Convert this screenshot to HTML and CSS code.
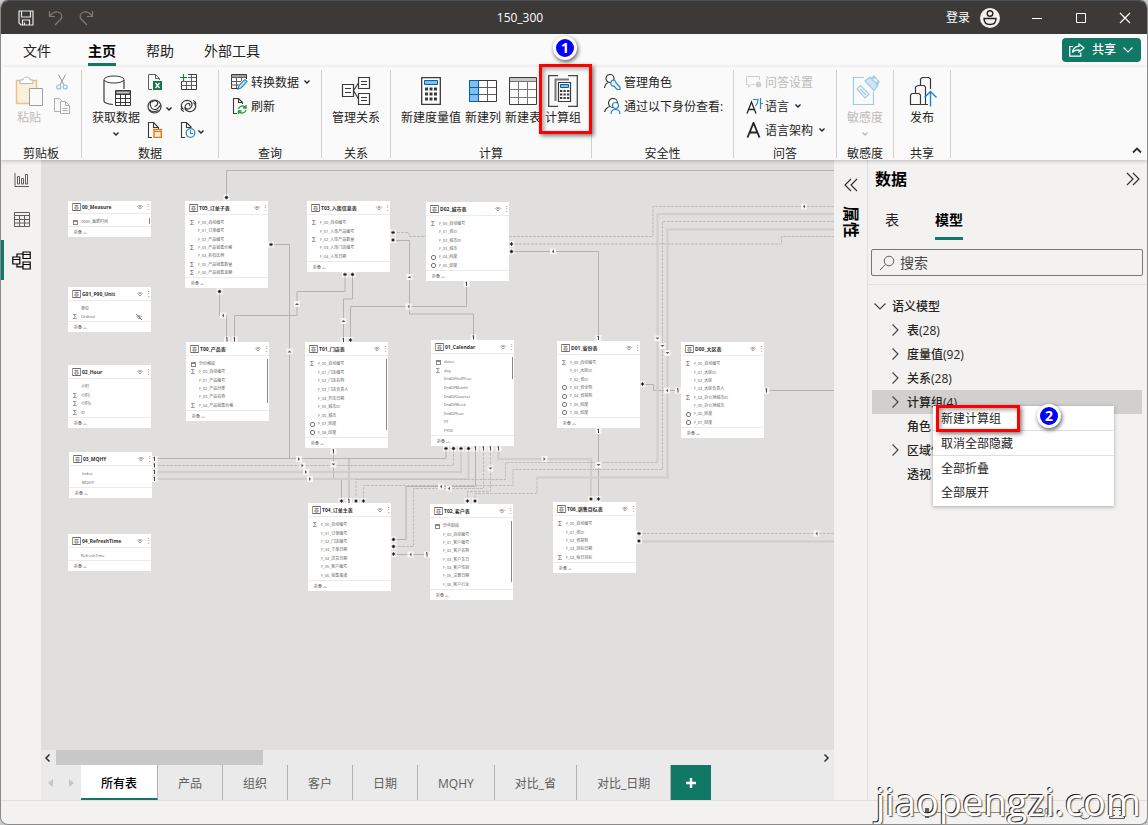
FILE: index.html
```html
<!DOCTYPE html>
<html lang="zh-CN">
<head>
<meta charset="utf-8">
<title>150_300</title>
<link rel="stylesheet" href="styles.css">
</head>
<body>
<svg class="sprite" aria-hidden="true">
  <defs>
    <symbol id="i-table" viewBox="0 0 9 8"><path d="M.5.5h8v7h-8z" fill="#fff" stroke="#6a6a70"/><path d="M.5 0v8" stroke="#c98b6a"/><path d="M8.500 0v8" stroke="#6f93b5"/><path d="M2.500 2.500h4M3 4h3v2H3z" fill="none" stroke="#6b6b6b" stroke-width=".8"/></symbol>
    <symbol id="i-eye" viewBox="0 0 8 6"><path d="M.8 3C2 1 6 1 7.200 3" fill="none" stroke="#a19f9d" stroke-width=".8"/><circle cx="4" cy="3.500" r="1.200" fill="none" stroke="#8a8886" stroke-width=".8"/></symbol>
    <symbol id="i-down" viewBox="0 0 8 8"><path d="M1.500 2.500 4 5l2.500-2.500" fill="none" stroke="currentColor" stroke-width="1.400"/></symbol>
    <symbol id="i-right" viewBox="0 0 12 12"><path d="M3.500.5 9 6l-5.500 5.500" fill="none" stroke="currentColor" stroke-width="1.200"/></symbol>
  </defs>
</svg>
<div class="window">
  <header class="titlebar">
    <div class="quick">
      <button type="button" aria-label="保存"><svg width="16" height="16" viewBox="0 0 16 16" fill="none" stroke="#e8e8e8" stroke-width="1.200"><path d="M1 1h14v14H3l-2-2zM3.500 1v6h9V1M4.500 15v-5h7v5M6.500 12.500V15"/></svg></button>
      <button type="button" aria-label="撤消"><svg width="16" height="16" viewBox="0 0 16 16" fill="none" stroke="#7d7b79" stroke-width="1.200"><path d="M1.500 1v5.500H7M1.500 6.500C4 3 7 1.500 10 2c4 .7 5 5 2.500 7.500L7 15"/></svg></button>
      <button type="button" aria-label="恢复"><svg width="16" height="16" viewBox="0 0 16 16" fill="none" stroke="#7d7b79" stroke-width="1.200"><path d="M14.500 1v5.500H9M14.500 6.500C12 3 9 1.500 6 2c-4 .7-5 5-2.500 7.500L9 15"/></svg></button>
    </div>
    <h1 class="doc">150_300</h1>
    <button class="login" type="button">登录 <svg width="20" height="20" viewBox="0 0 20 20"><circle cx="10" cy="10" r="10" fill="#f3f2f1"/><circle cx="10" cy="5.500" r="2.800" fill="none" stroke="#252423" stroke-width="1.400"/><path d="M4 10.500h12c0 4-2.500 6-6 6s-6-2-6-6z" fill="none" stroke="#252423" stroke-width="1.400"/></svg></button>
    <button class="win" type="button" aria-label="最小化"><svg width="12" height="12" viewBox="0 0 12 12"><path d="M1 6.500h10" stroke="#fff"/></svg></button>
    <button class="win" type="button" aria-label="最大化"><svg width="12" height="12" viewBox="0 0 12 12"><path d="M1.500 1.500h9v9h-9z" fill="none" stroke="#fff"/></svg></button>
    <button class="win" type="button" aria-label="关闭"><svg width="12" height="12" viewBox="0 0 12 12"><path d="m1 1 10 10M11 1 1 11" stroke="#fff" stroke-width="1.200"/></svg></button>
  </header>

  <nav class="menubar">
    <a href="#file" class="file">文件</a>
    <a href="#home" class="current">主页</a>
    <a href="#help">帮助</a>
    <a href="#tools">外部工具</a>
    <button class="share" type="button"><svg width="16" height="14" viewBox="0 0 16 14" fill="none" stroke="#fff" stroke-width="1.200"><path d="M4 3.500H.8v9.700h11V9.500"/><path d="M10 1l5 4-5 4V6.800C7 6.800 5 7.500 3.500 9.500 4 6 6 3.500 10 3.200z"/></svg><span>共享</span><svg width="10" height="6" viewBox="0 0 10 6"><path d="m.5.5 4.500 4.500L9.500.5" fill="none" stroke="#fff" stroke-width="1.200"/></svg></button>
  </nav>

  <section class="ribbon">
    <div class="group g-clip">
      <div class="tools">
        <button class="big off" type="button"><svg width="30" height="32" viewBox="0 0 30 32" fill="none"><path d="M2.500 5.500h20v23h-20z" fill="#faf0da" stroke="#f0bf85" stroke-width="1.500"/><path d="M6 8.500V5h3c0-4 7-4 7 0h3v3.500z" fill="#fff" stroke="#b9b7b5"/><path d="M15.500 13.500h13v17h-13z" fill="#fafafa" stroke="#a19f9d"/></svg><span>粘贴</span></button>
        <div class="stack">
          <button type="button" aria-label="剪切"><svg width="12" height="16" viewBox="0 0 12 16" fill="none"><path d="M2.500.5 8 11M9.500.5 4 11" stroke="#9a9896"/><circle cx="2.800" cy="13" r="2" stroke="#8dbfe0" stroke-width="1.200"/><circle cx="9.200" cy="13" r="2" stroke="#8dbfe0" stroke-width="1.200"/></svg></button>
          <button type="button" aria-label="复制"><svg width="16" height="16" viewBox="0 0 16 16" fill="none" stroke="#b0aeac"><path d="M6 13.500H.5V.5h5l2 2"/><path d="M6.500 3.500h5l4 4v8h-9zM11.500 3.500v4h4M8.500 10.500h5M8.500 12.500h5"/></svg></button>
        </div>
      </div>
      <p>剪贴板</p>
    </div>

    <div class="group g-data">
      <div class="tools">
        <button class="big" type="button"><svg width="30" height="32" viewBox="0 0 30 32" fill="none" stroke="#3b3a39"><ellipse cx="13" cy="4.500" rx="10" ry="3.500" fill="#fff"/><path d="M3 5v21c0 2 4 3 9 3.500M23 5v9" stroke-width="1.200"/><path d="M14.500 15.500h15v15h-15z" fill="#fff"/><path d="M15 16h14v3H15z" fill="#c8c6c4"/><path d="M14.500 19.500h15M14.500 23.500h15M14.500 27.500h15M19.500 19v11M24.500 19v11"/></svg><span>获取数据</span><svg width="8" height="8"><use href="#i-down"/></svg></button>
        <div class="stack">
          <button type="button" aria-label="Excel 工作簿"><svg width="16" height="16" viewBox="0 0 16 16" fill="none"><path d="M5 15.500H1.500V.5h7l4 4V6M8.500.5v4h4" stroke="#605e5c"/><path d="M6 7h9v9H6z" fill="#107c41"/><path d="m8.500 9 4 5M12.500 9l-4 5" stroke="#fff" stroke-width="1.300"/></svg></button>
          <button type="button" aria-label="数据中心"><svg width="15" height="15" viewBox="0 0 15 15" fill="none" stroke="#3b3a39" stroke-width="1.200"><circle cx="7.500" cy="7.500" r="6.500"/><path d="M4 2C2 5.500 4 10 7 10.500c3 .5 5-2 6.500-4.500M4.500 3.500C6 1.500 9 1 10.500 3c1 2-1 4-3 4.500M2 10.500c3 3 7 2.500 9.500.5"/></svg></button>
          <button type="button" aria-label="输入数据"><svg width="16" height="16" viewBox="0 0 16 16" fill="none"><path d="M5 15.500H1.500V.5h5l5 5V7M6.500.5v5h5" stroke="#3b3a39" stroke-width="1.100"/><path d="M7 7.500h7.300v8H7z" fill="#fbe9d5" stroke="#e07a1f" stroke-width="1.400"/><path d="M7 9.500h7" stroke="#e07a1f"/></svg></button>
        </div>
        <svg class="drop" width="8" height="8"><use href="#i-down"/></svg>
        <div class="stack">
          <button type="button" aria-label="SQL Server"><svg width="17" height="16" viewBox="0 0 17 16" fill="none"><path d="M1.500 8v7.500h15V.5H8" stroke="#3b3a39"/><path d="M1 11.500h15M8 3.500h8M1 7.500h15M6.500 7v8M11.500 1v14" stroke="#605e5c"/><path d="M0 3.500h7M3.500 0v7" stroke="#10893e" stroke-width="1.200"/></svg></button>
          <button type="button" aria-label="Dataverse"><svg width="17" height="14" viewBox="0 0 17 14" fill="none" stroke="#3b3a39" stroke-width="1.200"><path d="M3.500 10.500C0 8 1 3.500 4.500 2 8 .5 12.500 2 12 6c-.3 3-4 5-6 3.500S5.500 5 8 4.500c1.500-.2 2.500 1 1.500 2.500M13.500 3.500c3.500 2.500 2.500 7-1 8.500-3.500 1.500-8 0-7.500-4"/><path d="M4 12.500c-3-1-3.500-3-2-5M13 1.500c3 1 3.500 3 2 5"/></svg></button>
          <button type="button" aria-label="最近使用的源"><svg width="16" height="16" viewBox="0 0 16 16" fill="none"><path d="M5 15.500H1.500V.5h5l5 5M6.500.5v5h5" stroke="#3b3a39" stroke-width="1.100"/><circle cx="10.500" cy="11" r="4.300" fill="#fff" stroke="#2b88c8" stroke-width="1.300"/><path d="M10.500 8v3.500h2.500" stroke="#2b88c8" stroke-width="1.200"/></svg></button>
        </div>
        <svg class="drop low" width="8" height="8"><use href="#i-down"/></svg>
      </div>
      <p>数据</p>
    </div>

    <div class="group g-query">
      <div class="stack">
        <button type="button"><svg width="17" height="16" viewBox="0 0 17 16" fill="none"><path d="M7 14.500H.5V.5h15V5" stroke="#3b3a39"/><path d="M1 1h14v2.500H1z" fill="#a19f9d"/><path d="M0 3.500h15M0 7.500h10M0 11h8M5.500 4v10M10.500 4v3" stroke="#605e5c"/><path d="m7 15 1-3.500L14 5.500l2 2-6 6.500z" fill="#d5e9f7" stroke="#2b88c8" stroke-width="1.200"/></svg><span>转换数据</span><svg width="8" height="8"><use href="#i-down"/></svg></button>
        <button type="button"><svg width="17" height="16" viewBox="0 0 17 16" fill="none"><path d="M6 15.500H2.500V.5h5l4 4V6M7.500.5v4h4" stroke="#3b3a39" stroke-width="1.100"/><path d="M7.500 11c.5-3 5-4 7-1.500M15 7v3h-3M15 12c-.5 3-5 4-7 1.500M7.500 16v-3h3" stroke="#2d9a3c" stroke-width="1.400"/></svg><span>刷新</span></button>
      </div>
      <p>查询</p>
    </div>

    <div class="group g-rel">
      <div class="tools">
        <button class="big" type="button"><svg width="30" height="32" viewBox="0 0 30 32" fill="none" stroke="#3b3a39" stroke-width="1.200"><path d="M1.500 9.500h11v12h-11zM17.500 2.500h11v11h-11zM17.500 18.500h11v11h-11zM12.500 15.500 17.500 8M12.500 15.500l5 8.500"/><path d="M4 13.500h6M4 17.500h6M20 6.500h6M20 9.500h6M20 22.500h6M20 25.500h6" stroke-width="1"/></svg><span>管理关系</span></button>
      </div>
      <p>关系</p>
    </div>

    <div class="group g-calc">
      <div class="tools">
        <button class="big" type="button"><svg width="20" height="32" viewBox="0 0 20 32" fill="none"><path d="M.7 2.700h18.600v26.600H.7z" fill="#fff" stroke="#3b3a39" stroke-width="1.300"/><path d="M3.500 5.500h13v4h-13z" fill="#83beec" stroke="#0063b1"/><path d="M4 14h12M4 19h12M4 24h12" stroke="#3b3a39" stroke-width="3" stroke-dasharray="3 1.500"/></svg><span>新建度量值</span></button>
        <button class="big" type="button"><svg width="28" height="32" viewBox="0 0 28 32" fill="none"><path d="M.5 5.500h27v21H.5z" fill="#fff"/><path d="M.5 5.500h9v21h-9z" fill="#83beec"/><path d="M9.500 5v21M18.500 5v21M1 12.500h26M1 19.500h26" stroke="#605e5c"/><path d="M.5 5.500h27v21H.5z" stroke="#3b3a39"/><path d="M9 5.500H.5v21H9M.5 12.500H9M.5 19.500H9M9.500 5v21" stroke="#0063b1"/></svg><span>新建列</span></button>
        <button class="big" type="button"><svg width="28" height="32" viewBox="0 0 28 32" fill="none"><path d="M.5 2.500h27v27H.5z" fill="#fff"/><path d="M1 3h26v3.500H1z" fill="#c8c6c4"/><path d="M.5 6.500h27M.5 14.500h27M.5 22.500h27M9.500 7v22M18.500 7v22" stroke="#797775"/><path d="M.5 2.500h27v27H.5z" stroke="#3b3a39"/></svg><span>新建表</span></button>
        <div class="callout">
          <button class="big" type="button"><svg width="30" height="32" viewBox="0 0 30 32" fill="none"><path d="M10 .7H.7v30.600H10M20 .7h9.300v30.600H20" stroke="#484644" stroke-width="1.300"/><path d="M7.500 26V4.500H21" stroke="#797775" stroke-width="2"/><path d="M10.500 7.500h12v19h-12z" fill="#fff" stroke="#3b3a39" stroke-width="1.200"/><path d="M12.500 9.500h8v3h-8z" fill="#83beec" stroke="#0063b1"/><path d="M12 16h9.500M12 19.500h9.500M12 23h9.500" stroke="#3b3a39" stroke-width="2.200" stroke-dasharray="2.300 1.200"/></svg><span>计算组</span></button>
          <i class="frame"></i><b class="marker">1</b>
        </div>
      </div>
      <p>计算</p>
    </div>

    <div class="group g-sec">
      <div class="stack">
        <button type="button"><svg width="17" height="16" viewBox="0 0 17 16" fill="none"><circle cx="6" cy="4.500" r="4" stroke="#3b3a39" stroke-width="1.200"/><path d="M.5 14c.5-3 2-5 4-5.500" stroke="#3b3a39" stroke-width="1.200"/><path d="M7 8c1-3 5-2 5 1l4 4v2.500h-3l-3-3.500c-2 .5-4-1.500-3-4z" fill="#eaf4fb" stroke="#2b88c8" stroke-width="1.200"/></svg><span>管理角色</span></button>
        <button type="button"><svg width="17" height="16" viewBox="0 0 17 16" fill="none"><circle cx="9" cy="5" r="4.500" stroke="#3b3a39" stroke-width="1.200"/><path d="M.5 14c1-3 3-5 5.500-5.500" stroke="#3b3a39" stroke-width="1.200"/><circle cx="11.500" cy="7.500" r="3" fill="#fafafa" stroke="#2b88c8" stroke-width="1.200"/><path d="M7 16c0-6 9-6 9 0" stroke="#2b88c8" stroke-width="1.200"/></svg><span>通过以下身份查看:</span></button>
      </div>
      <p>安全性</p>
    </div>

    <div class="group g-qa">
      <div class="stack">
        <button class="off" type="button"><svg width="17" height="14" viewBox="0 0 17 14" fill="none" stroke="#d2d0ce"><path d="M9 9.500H5l-2.500 3v-3h-2v-8h13V5"/><circle cx="12.500" cy="9.500" r="2.500" fill="#d2d0ce"/></svg><span>问答设置</span></button>
        <button type="button"><svg width="17" height="16" viewBox="0 0 17 16" fill="none"><path d="M1 15.500 5.500 4 10 15.500M2.500 11.500h6" stroke="#252423" stroke-width="1.300"/><path d="M7 1.500h5c0 3-1 5-2.500 6.500M14.500 0v11M14.500 5.500H17" stroke="#2b88c8" stroke-width="1.200"/></svg><span>语言</span><svg width="8" height="8"><use href="#i-down"/></svg></button>
        <button type="button"><svg width="17" height="16" viewBox="0 0 17 16" fill="none"><path d="M1.500 15.500 7.500.8l6 14.700M4 10.500h7.500" stroke="#252423" stroke-width="1.800"/></svg><span>语言架构</span><svg width="8" height="8"><use href="#i-down"/></svg></button>
      </div>
      <p>问答</p>
    </div>

    <div class="group g-sens">
      <div class="tools">
        <button class="big off" type="button"><svg width="30" height="32" viewBox="0 0 30 32" fill="none" stroke="#9fcbe8" stroke-width="1.200"><path d="M14 2.500H3.500v27h20V17"/><path d="m7 14 3.500-3.500L19 19l-4 4z" fill="#fafafa"/><path d="m10 14 6 6"/><path d="m15 6 5-4 8 8-4 5.500z" fill="#cfe5f4"/><path d="m21 4 3-3 5 6-3 3M25 2l-2 2M29 6l-3 2"/></svg><span>敏感度</span><svg width="8" height="8"><use href="#i-down"/></svg></button>
      </div>
      <p>敏感度</p>
    </div>

    <div class="group g-pub">
      <div class="tools">
        <button class="big" type="button"><svg width="30" height="32" viewBox="0 0 30 32" fill="none" stroke="#3b3a39" stroke-width="1.200"><path d="M23.500 14V4l-2-1.500h-6L13.500 4v6M18.500 17v-5l-1.500-1.500h-6L8.500 12v6M13.500 29.500V20l-1.500-1.500H5L3.500 20v9.500H21M18.500 17v12"/><path d="M23.500 31.500V16.500M17.500 22.500l6-6 6 6" stroke="#1a86c7" stroke-width="1.400"/></svg><span>发布</span></button>
      </div>
      <p>共享</p>
    </div>
    <button class="fold" type="button" aria-label="折叠功能区"><svg width="10" height="7" viewBox="0 0 10 7"><path d="m1 5.500 4-4 4 4" fill="none" stroke="#323130" stroke-width="1.800"/></svg></button>
  </section>

  <main class="work">
    <nav class="views">
      <a href="#report" aria-label="报表视图"><svg width="16" height="16" viewBox="0 0 16 16" fill="none" stroke="#605e5c"><path d="M1 1v13.500h14M3.500 4.500h2v7.500h-2zM7.500 6.500h2V12h-2zM11.500 2.500h2V12h-2z"/></svg></a>
      <a href="#table" aria-label="表格视图"><svg width="16" height="16" viewBox="0 0 16 16" fill="none" stroke="#605e5c"><path d="M.5.5h15v14H.5zM0 3.500h16M0 7.500h16M0 11h16M5.500 3v12M10.500 3v12"/></svg></a>
      <a href="#model" class="current" aria-label="模型视图"><svg width="19" height="19" viewBox="0 0 19 19" fill="none" stroke="#000" stroke-width="1.200"><path d="M.8 6h7v7h-7zM.8 8.500h7M11 1h7.200v6.500H11zM11 3.500h7M11 11h7.200v7H11zM11 13.500h7M5 6V3h6M5 13v2.800h6"/></svg></a>
    </nav>

    <div class="center">
      <div class="canvas">
        <svg class="wires" width="793" height="590" viewBox="41 160 793 590">
          <defs>
            <g id="w1"><rect x="-3" y="-3" width="6" height="6" fill="#f6f5f4"/><path d="M-1-1.500 0-2V2" fill="none" stroke="#323130" stroke-width=".9"/></g>
            <g id="wm"><rect x="-3" y="-3" width="6" height="6" fill="#f6f5f4"/><path d="M-1.800 0h3.600M0-1.800v3.600M-1.200-1.200l2.400 2.400M1.200-1.200l-2.400 2.400" stroke="#111" stroke-width=".8"/></g>
            <g id="wl"><rect x="-3" y="-3" width="6" height="6" fill="#f6f5f4"/><path d="M1-2v4l-2-2z" fill="#605e5c"/></g>
            <g id="wr"><rect x="-3" y="-3" width="6" height="6" fill="#f6f5f4"/><path d="M-1-2v4l2-2z" fill="#605e5c"/></g>
            <g id="wu"><rect x="-3" y="-3" width="6" height="6" fill="#f6f5f4"/><path d="M-2 1h4L0-1z" fill="#605e5c"/></g>
            <g id="wd"><rect x="-3" y="-3" width="6" height="6" fill="#f6f5f4"/><path d="M-2-1h4L0 1z" fill="#605e5c"/></g>
          </defs>
          <g class="solid">
            <path d="M226.500 197v-26.500H834M271 244.500h18.500v214h59.500V500M219.500 291v24.500h7V339M234.500 339v-23.500h62.500v-24h48V275M352.500 275v24h-9v41M350.500 340v-33.500h116V284M393 240.500h16.500v73.500h64V337M511 251.500h87.500V338M642 384.500h11.500v6H680M766 390.500h68M598.500 431v68M154 458.500h292V449M475.500 449v37.500h-69.500v53H393M333.500 451v28.500h8V500M393 554.500h35"/>
          </g>
          <g class="pale">
            <path d="M154 472h307v-23M154 479h314.500v-30M498.500 449v10H591v40M834 229.500H667.500V477.500H537M639 541.500h195M834 214H657.500V462.500"/>
          </g>
          <g class="dash">
            <path d="M393 232.500h16v4h244v-30h181M511 244h270.500v-7.500H834M657.500 462.500H505.500v17H356V500M834 221.500H662.500V469.500H513v16H363.500V500M537 477.500v16h-62V500M154 465.500h299.500V449M483.500 449v39.500h-70v58H393M490.500 449v42.500h-23V500M639 533.500h195"/>
          </g>
          <use href="#wm" x="226.500" y="197.500"/><use href="#wm" x="271" y="244.500"/><use href="#wm" x="219.500" y="291.500"/><use href="#wl" x="223" y="315.500"/><use href="#w1" x="227" y="339.500"/><use href="#w1" x="234.500" y="339.500"/>
          <use href="#wu" x="289.500" y="351.500"/><use href="#wu" x="297" y="304"/><use href="#wm" x="345" y="274.500"/><use href="#wm" x="352.500" y="274.500"/><use href="#wu" x="343.500" y="321"/><use href="#w1" x="343.500" y="340"/><use href="#wm" x="350.500" y="340"/>
          <use href="#wl" x="408.500" y="306.500"/><use href="#w1" x="466.500" y="284"/><use href="#wm" x="393" y="232.500"/><use href="#wm" x="393" y="240"/><use href="#wu" x="409.500" y="277"/><use href="#w1" x="473.500" y="337.500"/><use href="#wl" x="804" y="206.500"/>
          <use href="#wm" x="511.500" y="244"/><use href="#wm" x="511.500" y="251.500"/><use href="#wl" x="553" y="251.500"/><use href="#w1" x="598.500" y="338"/><use href="#wd" x="657.500" y="338.500"/><use href="#wd" x="662.500" y="346"/><use href="#wd" x="667.500" y="353"/>
          <use href="#wm" x="642.500" y="384"/><use href="#wl" x="667" y="390.500"/><use href="#w1" x="678" y="390.500"/><use href="#w1" x="766.500" y="390.500"/><use href="#w1" x="598.500" y="431"/><use href="#wd" x="598.500" y="465"/><use href="#wm" x="598.500" y="499"/><use href="#wm" x="591" y="499"/><use href="#wr" x="544.500" y="459"/>
          <use href="#w1" x="154.500" y="459"/><use href="#w1" x="154.500" y="465.500"/><use href="#w1" x="154.500" y="472"/><use href="#w1" x="154.500" y="479"/><use href="#wr" x="299" y="459"/><use href="#wr" x="302.500" y="465.500"/><use href="#wr" x="306" y="472"/><use href="#wr" x="310" y="479"/>
          <use href="#wm" x="446" y="448.500"/><use href="#wm" x="453.500" y="448.500"/><use href="#wm" x="461" y="448.500"/><use href="#wm" x="468.500" y="448.500"/><use href="#w1" x="475.500" y="448.500"/><use href="#w1" x="483.500" y="448.500"/><use href="#w1" x="490.500" y="448.500"/><use href="#w1" x="498.500" y="448.500"/>
          <use href="#wl" x="441" y="486.500"/><use href="#wl" x="449" y="488.500"/><use href="#wd" x="490.500" y="468.500"/><use href="#wm" x="467.500" y="501"/><use href="#wm" x="475" y="501"/><use href="#w1" x="333.500" y="451.500"/><use href="#wd" x="333.500" y="464.500"/>
          <use href="#wm" x="341.500" y="501"/><use href="#w1" x="349" y="501"/><use href="#wm" x="356" y="501"/><use href="#wm" x="363.500" y="501"/><use href="#wm" x="393.500" y="539.500"/><use href="#wm" x="393.500" y="546.500"/><use href="#wm" x="393.500" y="554"/><use href="#wl" x="410.500" y="554.500"/><use href="#w1" x="427" y="554.500"/>
          <use href="#wm" x="639" y="533.500"/><use href="#wm" x="639" y="541"/><use href="#wl" x="816.500" y="533.500"/>
        </svg>

        <article class="node n-measure short"><h2><svg><use href="#i-table"/></svg>00_Measure<svg class="eye"><use href="#i-eye"/></svg></h2><ul><li class="calc">0000_最新时间</li></ul><footer>折叠 ︿</footer></article>
        <article class="node n-unit"><h2><svg><use href="#i-table"/></svg>G01_P90_Unit<svg class="eye"><use href="#i-eye"/></svg></h2><ul><li>单位</li><li class="sum">Ordinal<svg class="eye"><use href="#i-eye"/><path d="m1 0 6 6" stroke="#605e5c" stroke-width=".8"/></svg></li></ul><footer>折叠 ︿</footer></article>
        <article class="node n-hour"><h2><svg><use href="#i-table"/></svg>02_Hour<svg class="eye"><use href="#i-eye"/></svg></h2><ul><li>小时</li><li class="sum">小时I</li><li class="sum">小时II</li><li class="sum">ID</li></ul><footer>折叠 ︿</footer></article>
        <article class="node n-mqhy"><h2><svg><use href="#i-table"/></svg>03_MQHY<svg class="eye"><use href="#i-eye"/></svg></h2><ul><li>Index</li><li>MQHY</li></ul><footer>折叠 ︿</footer></article>
        <article class="node n-refresh"><h2><svg><use href="#i-table"/></svg>04_RefreshTime<svg class="eye"><use href="#i-eye"/></svg></h2><ul><li>RefreshTime</li></ul><footer>折叠 ︿</footer></article>
        <article class="node n-t05"><h2><svg><use href="#i-table"/></svg>T05_订单子表<svg class="eye"><use href="#i-eye"/></svg></h2><ul><li class="sum">F_00_自动编号</li><li>F_01_订单编号</li><li>F_02_产品编号</li><li class="sum">F_03_产品销售价格</li><li>F_04_折扣比例</li><li class="sum">F_05_产品销售数量</li><li class="sum">F_06_产品销售金额</li></ul><footer>折叠 ︿</footer></article>
        <article class="node n-t00 long"><h2><svg><use href="#i-table"/></svg>T00_产品表<svg class="eye"><use href="#i-eye"/></svg></h2><ul><li class="calc">分价格段</li><li class="sum">F_00_自动编号</li><li>F_01_产品编号</li><li>F_02_产品分类</li><li>F_03_产品名称</li><li class="sum">F_04_产品销售价格</li></ul><footer>折叠 ︿</footer></article>
        <article class="node n-t03"><h2><svg><use href="#i-table"/></svg>T03_入库信息表<svg class="eye"><use href="#i-eye"/></svg></h2><ul><li class="sum">F_00_自动编号</li><li>F_01_入库产品编号</li><li class="sum">F_02_入库产品数量</li><li>F_03_入库门店编号</li><li>F_04_入库日期</li></ul><footer>折叠 ︿</footer></article>
        <article class="node n-d02"><h2><svg><use href="#i-table"/></svg>D02_城市表<svg class="eye"><use href="#i-eye"/></svg></h2><ul><li class="sum">F_00_自动编号</li><li>F_01_省ID</li><li>F_02_城市ID</li><li>F_03_城市</li><li class="geo">F_04_纬度</li><li class="geo">F_05_经度</li></ul><footer>折叠 ︿</footer></article>
        <article class="node n-t01 long"><h2><svg><use href="#i-table"/></svg>T01_门店表<svg class="eye"><use href="#i-eye"/></svg></h2><ul><li class="sum">F_00_自动编号</li><li>F_01_门店编号</li><li>F_02_门店名称</li><li>F_03_门店负责人</li><li>F_04_开店日期</li><li>F_05_城市ID</li><li>F_06_城市</li><li class="geo">F_07_纬度</li><li class="geo">F_08_经度</li></ul><footer>折叠 ︿</footer></article>
        <article class="node n-cal short"><h2><svg><use href="#i-table"/></svg>01_Calendar<svg class="eye"><use href="#i-eye"/></svg></h2><ul><li class="calc">dates</li><li class="sum">day</li><li>EndOfHalfYear</li><li>EndOfMonth</li><li>EndOfQuarter</li><li>EndOfWeek</li><li>EndOfYear</li><li>FY</li><li>FY00</li></ul><footer>折叠 ︿</footer></article>
        <article class="node n-d01"><h2><svg><use href="#i-table"/></svg>D01_省份表<svg class="eye"><use href="#i-eye"/></svg></h2><ul><li class="sum">F_00_自动编号</li><li>F_01_大区ID</li><li>F_02_省ID</li><li class="geo">F_03_省全称</li><li class="geo">F_04_省简称</li><li class="geo">F_05_纬度</li><li class="geo">F_06_经度</li></ul><footer>折叠 ︿</footer></article>
        <article class="node n-d00"><h2><svg><use href="#i-table"/></svg>D00_大区表<svg class="eye"><use href="#i-eye"/></svg></h2><ul><li class="sum">F_00_自动编号</li><li>F_01_大区ID</li><li>F_02_大区</li><li>F_03_大区负责人</li><li class="sum">F_04_办公场城市ID</li><li>F_05_办公场城市</li><li class="geo">F_06_纬度</li><li class="geo">F_07_经度</li></ul><footer>折叠 ︿</footer></article>
        <article class="node n-t04"><h2><svg><use href="#i-table"/></svg>T04_订单主表<svg class="eye"><use href="#i-eye"/></svg></h2><ul><li class="sum">F_00_自动编号</li><li>F_01_订单编号</li><li>F_02_门店编号</li><li>F_03_下单日期</li><li>F_04_送货日期</li><li>F_05_客户编号</li><li>F_06_销售渠道</li></ul><footer>折叠 ︿</footer></article>
        <article class="node n-t02 long"><h2><svg><use href="#i-table"/></svg>T02_客户表<svg class="eye"><use href="#i-eye"/></svg></h2><ul><li class="calc">分年龄段</li><li>F_00_自动编号</li><li>F_01_客户编号</li><li>F_02_客户名称</li><li>F_03_客户生日</li><li>F_04_客户性别</li><li>F_05_注册日期</li><li>F_06_客户行业</li></ul><footer>折叠 ︿</footer></article>
        <article class="node n-t06"><h2><svg><use href="#i-table"/></svg>T06_销售目标表<svg class="eye"><use href="#i-eye"/></svg></h2><ul><li class="sum">F_00_自动编号</li><li>F_01_省ID</li><li>F_02_省简称</li><li>F_03_目标日期</li><li class="sum">F_04_每日目标</li></ul><footer>折叠 ︿</footer></article>
      </div>

      <div class="hscroll">
        <button type="button" aria-label="向左滚动"><svg width="8" height="10" viewBox="0 0 8 10"><path d="M5.500 1.500 2 5l3.500 3.500" fill="none" stroke="#323130" stroke-width="1.500"/></svg></button>
        <div class="track"><div class="thumb"></div></div>
        <button type="button" aria-label="向右滚动"><svg width="8" height="10" viewBox="0 0 8 10"><path d="M2.500 1.500 6 5 2.500 8.500" fill="none" stroke="#323130" stroke-width="1.500"/></svg></button>
      </div>
      <nav class="pages">
        <button class="step" type="button" aria-label="上一页"><svg width="6" height="10" viewBox="0 0 6 10"><path d="M5 1v8L0 5z" fill="#c8c6c4"/></svg></button>
        <button class="step" type="button" aria-label="下一页"><svg width="6" height="10" viewBox="0 0 6 10"><path d="M1 1v8l5-4z" fill="#c8c6c4"/></svg></button>
        <a href="#p1" class="current">所有表</a><a href="#p2">产品</a><a href="#p3">组织</a><a href="#p4">客户</a><a href="#p5">日期</a><a href="#p6">MQHY</a><a href="#p7">对比_省</a><a href="#p8">对比_日期</a>
        <button class="add" type="button" aria-label="新建页"><svg width="12" height="12" viewBox="0 0 12 12"><path d="M6 1v10M1 6h10" stroke="#fff" stroke-width="2.400"/></svg></button>
      </nav>
    </div>

    <aside class="props">
      <button type="button" aria-label="展开属性"><svg width="14" height="14" viewBox="0 0 14 14"><path d="M7 1 1 7l6 6M13 1 7 7l6 6" fill="none" stroke="#323130" stroke-width="1.200"/></svg></button>
      <h2>属性</h2>
    </aside>

    <aside class="data">
      <div class="head"><h2>数据</h2><button type="button" aria-label="折叠数据"><svg width="14" height="14" viewBox="0 0 14 14"><path d="m1 1 6 6-6 6M7 1l6 6-6 6" fill="none" stroke="#323130" stroke-width="1.200"/></svg></button></div>
      <nav class="switch"><a href="#tables">表</a><a href="#models" class="current">模型</a></nav>
      <label class="search"><svg width="16" height="16" viewBox="0 0 16 16"><circle cx="10" cy="6" r="4.800" fill="none" stroke="#605e5c"/><path d="M6.500 9.500 1 15" stroke="#605e5c"/></svg><input type="text" placeholder="搜索" aria-label="搜索"></label>
      <ul class="tree">
        <li class="root"><svg width="12" height="12" viewBox="0 0 12 12"><path d="m.5 3.500 5.500 5.500 5.500-5.500" fill="none" stroke="currentColor" stroke-width="1.200"/></svg><span>语义模型</span></li>
        <li><svg width="12" height="12"><use href="#i-right"/></svg><span>表</span>(28)</li>
        <li><svg width="12" height="12"><use href="#i-right"/></svg><span>度量值</span>(92)</li>
        <li><svg width="12" height="12"><use href="#i-right"/></svg><span>关系</span>(28)</li>
        <li class="picked"><svg width="12" height="12"><use href="#i-right"/></svg><span>计算组</span>(4)
          <div class="menu">
            <div class="callout"><button type="button">新建计算组</button><i class="frame"></i><b class="marker">2</b></div>
            <button type="button" class="ruled">取消全部隐藏</button>
            <button type="button">全部折叠</button>
            <button type="button">全部展开</button>
          </div>
        </li>
        <li class="leaf"><span>角色</span></li>
        <li><svg width="12" height="12"><use href="#i-right"/></svg><span>区域性</span></li>
        <li class="leaf"><span>透视</span></li>
      </ul>
    </aside>
  </main>

  <footer class="status">
    <span>−</span><input type="range" min="10" max="400" value="80" aria-label="缩放"><span>+</span><output>53%</output>
    <svg class="reset" width="14" height="14" viewBox="0 0 14 14" fill="none" stroke="#605e5c"><circle cx="7" cy="7" r="6"/><path d="M1 3v4h4"/></svg>
    <svg width="16" height="14" viewBox="0 0 16 14" fill="none" stroke="#605e5c"><path d="M.5 1.500h15v11H.5z"/><path d="M3.500 6V4.500H6M10 4.500h2.500V6M3.500 8v1.500H6M10 9.500h2.500V8"/></svg>
    <strong class="stamp">jiaopengzi.com</strong>
  </footer>
</div>
</body>
</html>
```
FILE: styles.css
```css
*, *::before, *::after { box-sizing: border-box; }
body {
  margin: 0;
  background: #c9c9c9;
  color: #252423;
  font: 12px/16px "Open Sans", "Noto Sans CJK SC", sans-serif;
}
h1, h2, p, ul { margin: 0; padding: 0; font-size: inherit; font-weight: 400; }
ul { list-style: none; }
a { color: inherit; text-decoration: none; }
button { padding: 0; border: 0; background: none; color: inherit; font: inherit; white-space: nowrap; }
svg { display: block; flex: none; }
.sprite { position: absolute; width: 0; height: 0; }

.window {
  display: flex;
  flex-direction: column;
  height: 100vh;
  border: 1px solid #8a8a8a;
  border-top-color: #4a5259;
  border-radius: 8px;
  overflow: hidden;
  background: #f3f2f1;
}

/* title bar */
.titlebar { display: flex; flex: none; align-items: center; height: 33px; background: #3b3a39; color: #fff; }
.quick { display: flex; gap: 14px; padding-left: 17px; }
.doc { flex: 1; text-align: center; }
.login { display: flex; align-items: center; gap: 10px; margin-right: 15px; }
.win { display: grid; place-items: center; width: 44px; height: 100%; }

/* menu tabs */
.menubar { display: flex; flex: none; align-items: center; gap: 30px; height: 33px; padding: 0 6px 0 22px; background: #fafafa; font-size: 14px; line-height: 24px; }
.menubar a { height: 30px; padding-top: 3px; border-bottom: 3px solid transparent; }
.menubar .file { margin-right: 7px; }
.menubar .current { border-color: #117865; color: #000; font-weight: 700; }
.share { display: flex; align-items: center; gap: 7px; height: 24px; margin: -2px 0 0 auto; padding: 0 8px 0 7px; border-radius: 4px; background: #117865; color: #fff; font-size: 12px; font-weight: 500; }

/* ribbon */
.ribbon { display: flex; flex: none; position: relative; z-index: 2; height: 93px; padding: 3px 0 2px; background: #fafafa; box-shadow: 0 1px 4px #0000003d; }
.group { display: flex; flex: none; flex-direction: column; justify-content: space-between; border-right: 1px solid #d2d0ce; }
.group p { height: 13px; text-align: center; line-height: 18px; }
.tools { display: flex; align-items: flex-start; }
.stack { display: flex; flex-direction: column; }
.stack button { display: flex; align-items: center; gap: 3px; height: 24px; }
.stack span { padding-top: 2px; }
.big { display: flex; flex-direction: column; align-items: center; padding-top: 5px; }
.big span { margin: 3px 0 4px; }
.off { color: #bdbbb9; }
.g-clip { width: 81px; }
.g-clip .tools { padding-left: 13px; gap: 10px; }
.g-clip .stack { align-items: center; }
.g-data { width: 137px; }
.g-data .tools { padding-left: 10px; }
.g-data .big { margin-right: 7px; }
.g-data .drop { margin: 35px 7px 0 2px; }
.g-data .drop.low { margin: 58px 0 0; }
.g-query { width: 103px; padding-left: 12px; }
.g-query p { margin-left: -12px; }
.g-rel { width: 69px; }
.g-rel .tools, .g-sens .tools, .g-pub .tools { justify-content: center; }
.g-calc { width: 201px; }
.g-calc .tools { gap: 4px; padding-left: 10px; }
.g-sec { width: 142px; padding-left: 12px; }
.g-qa { width: 103px; padding-left: 12px; }
.g-sec p, .g-qa p { margin-left: -12px; }
.g-qa .stack button { gap: 2px; }
.g-qa .stack button svg:nth-of-type(2) { margin-left: 3px; }
.g-query .stack button svg:nth-of-type(2) { margin-left: 1px; }
.g-sens, .g-pub { width: 57px; }
.fold { margin: auto 5px 4px auto; }

/* numbered highlights */
.callout { position: relative; }
.frame { position: absolute; inset: -6px -11px -4px -6px; border: 3px solid #f00; box-shadow: 2px 2px 4px #00000080, inset 2px 2px 4px #00000060; pointer-events: none; }
.marker { position: absolute; top: -34px; left: 8px; width: 24px; height: 24px; border: 3px solid #fff; border-radius: 50%; background: #00f; box-shadow: 1px 2px 4px #000000a0; color: #fff; font: 700 14px/18px "Noto Sans", sans-serif; text-align: center; }

/* work area */
.work { display: flex; flex: 1; min-height: 0; }
.views { width: 40px; background: #f3f2f1; }
.views a { display: grid; place-items: center; height: 40px; padding-right: 2px; border-left: 3px solid transparent; }
.views .current { border-color: #117865; }
.center { display: flex; flex: 1; flex-direction: column; min-width: 0; background: #eaeaea; }
.canvas { position: relative; flex: 1; overflow: hidden; background: #e1dfdd; }
.wires { position: absolute; top: 0; left: 0; }
.solid, .pale, .dash { fill: none; }
.solid { stroke: #b5b3b1; }
.pale { stroke: #d0cecc; stroke-width: 2px; }
.dash { stroke: #bfbdbb; stroke-dasharray: 3 1; }

.node { position: absolute; display: flex; flex-direction: column; width: 83px; background: #fff; color: #605e5c; font-size: 4px; line-height: 8px; }
.node h2 { display: flex; align-items: center; gap: 1px; height: 14px; padding: 0 1px 0 4px; border-bottom: 1px solid #edebe9; color: #323130; font-size: 5px; font-weight: 700; }
.node h2 svg { width: 9px; height: 8px; }
.node h2 .eye { width: 8px; height: 6px; margin-left: auto; }
.node h2::after { content: "⋮"; width: 5px; color: #8a8886; font-size: 7px; font-weight: 400; text-align: center; }
.node ul { display: flex; flex: 1; flex-direction: column; padding-top: 4px; }
.node li { display: flex; flex: 1; align-items: center; padding-left: 5px; }
.node li::before { content: ""; flex: none; width: 8px; font-size: 7px; }
.node .sum::before { content: "Σ"; }
.node .calc::before { width: 5px; height: 5px; margin-right: 3px; border: 1px solid #8a8886; border-top-width: 2px; }
.node .geo::before { width: 5px; height: 5px; margin-right: 3px; border: 1px solid #797775; border-radius: 2px; }
.node li .eye { width: 8px; height: 6px; margin: 0 8px 0 auto; }
.node footer { height: 11px; padding: 2px 6px 0; border-top: 1px solid #edebe9; }
.long::after, .short::after { content: ""; position: absolute; top: 17px; right: 1px; bottom: 18px; width: 1px; background: #8a8886; }
.short::after { height: 22px; }
.n-measure.short::after { height: 6px; }
.n-measure { left: 27px; top: 41px; height: 36px; }
.n-unit { left: 27px; top: 127px; height: 45px; }
.n-hour { left: 27px; top: 205px; height: 63px; }
.n-mqhy { left: 28px; top: 292px; height: 46px; }
.n-refresh { left: 27px; top: 374px; height: 37px; }
.n-t05 { left: 144px; top: 41px; height: 87px; }
.n-t00 { left: 145px; top: 182px; height: 79px; }
.n-t03 { left: 266px; top: 41px; height: 71px; }
.n-d02 { left: 385px; top: 42px; height: 79px; }
.n-t01 { left: 264px; top: 182px; height: 106px; }
.n-cal { left: 390px; top: 180px; height: 106px; }
.n-d01 { left: 516px; top: 181px; height: 87px; }
.n-d00 { left: 640px; top: 182px; height: 96px; }
.n-t04 { left: 267px; top: 343px; height: 88px; }
.n-t02 { left: 389px; top: 344px; height: 96px; }
.n-t06 { left: 512px; top: 342px; height: 71px; }

/* canvas scrollbar and page tabs */
.hscroll { display: flex; align-items: center; height: 15px; padding: 0 0 0 3px; }
.hscroll button { width: 12px; }
.track { flex: 1; height: 15px; }
.thumb { width: 27%; height: 15px; background: #c8c8c8; }
.pages { display: flex; height: 35px; color: #605e5c; }
.pages a { padding: 11px 20px 0; border-right: 1px solid #b3b0ad; }
.pages .current { border-bottom: 2px solid #117865; background: #fff; color: #000; font-weight: 500; }
.step { display: grid; place-items: center; width: 20px; }
.add { display: grid; place-items: center; width: 40px; background: #117865; }

/* collapsed properties pane */
.props { display: flex; flex: none; flex-direction: column; align-items: center; gap: 14px; width: 34px; padding-top: 18px; border-right: 1px solid #e1dfdd; }
.props h2 { color: #000; font-size: 16px; font-weight: 700; line-height: 24px; writing-mode: vertical-rl; text-orientation: sideways; }

/* data pane */
.data { flex: none; width: 279px; }
.head { display: flex; align-items: center; justify-content: space-between; height: 38px; padding: 0 7px; }
.head h2 { color: #000; font-size: 16px; font-weight: 700; }
.switch { display: flex; gap: 36px; padding: 8px 17px; font-size: 14px; line-height: 28px; }
.switch a { height: 34px; }
.switch .current { border-bottom: 3px solid #117865; color: #000; font-weight: 700; }
.search { display: flex; align-items: center; gap: 5px; height: 27px; margin: 1px 4px 8px 3px; padding-left: 7px; border: 1px solid #797775; border-radius: 2px; }
.search input { flex: 1; min-width: 0; padding: 0; border: 0; outline: 0; background: none; color: #323130; font: 14px/20px "Open Sans", "Noto Sans CJK SC", sans-serif; }
.search input::placeholder { color: #484644; opacity: 1; }
.tree { padding: 9px 5px 0 4px; border-top: 1px solid #e1dfdd; }
.tree li { display: flex; position: relative; align-items: center; height: 24px; padding: 2px 0 0 17px; }
.tree li > svg { margin: -2px 6px 0 0; color: #484644; }
.tree span { font-weight: 500; }
.tree .root { padding-left: 2px; }
.tree .leaf { padding-left: 35px; }
.tree .picked { background: #d2d0ce; }
.menu { position: absolute; z-index: 3; top: 16px; left: 61px; display: flex; flex-direction: column; width: 181px; padding-bottom: 2px; background: #fff; box-shadow: 0 1px 4px #00000050; }
.menu button { height: 24px; padding: 2px 0 0 8px; text-align: left; }
.menu .ruled { height: 26px; border: solid #e1dfdd; border-width: 1px 0; }
.menu .frame { inset: -1px auto -2px 3px; width: 84px; }
.menu .marker { top: -2px; left: 104px; }

/* status bar */
.status { display: flex; flex: none; position: relative; align-items: center; justify-content: flex-end; gap: 6px; height: 24px; padding-right: 22px; border-top: 1px solid #e1dfdd; color: #605e5c; }
.status input { width: 104px; height: 14px; margin: 0; appearance: none; background: linear-gradient(#8a8886, #8a8886) center / 100% 1px no-repeat; }
.status input::-webkit-slider-thumb { appearance: none; width: 4px; height: 10px; background: #605e5c; }
.reset { margin: 0 11px 0 18px; }
.stamp { position: absolute; right: 6px; bottom: 0; color: #fff; font: 400 38px/46px "Open Sans", sans-serif; text-shadow: -1px -1px 0 #222, 1px 1px 1px #555; }
```
